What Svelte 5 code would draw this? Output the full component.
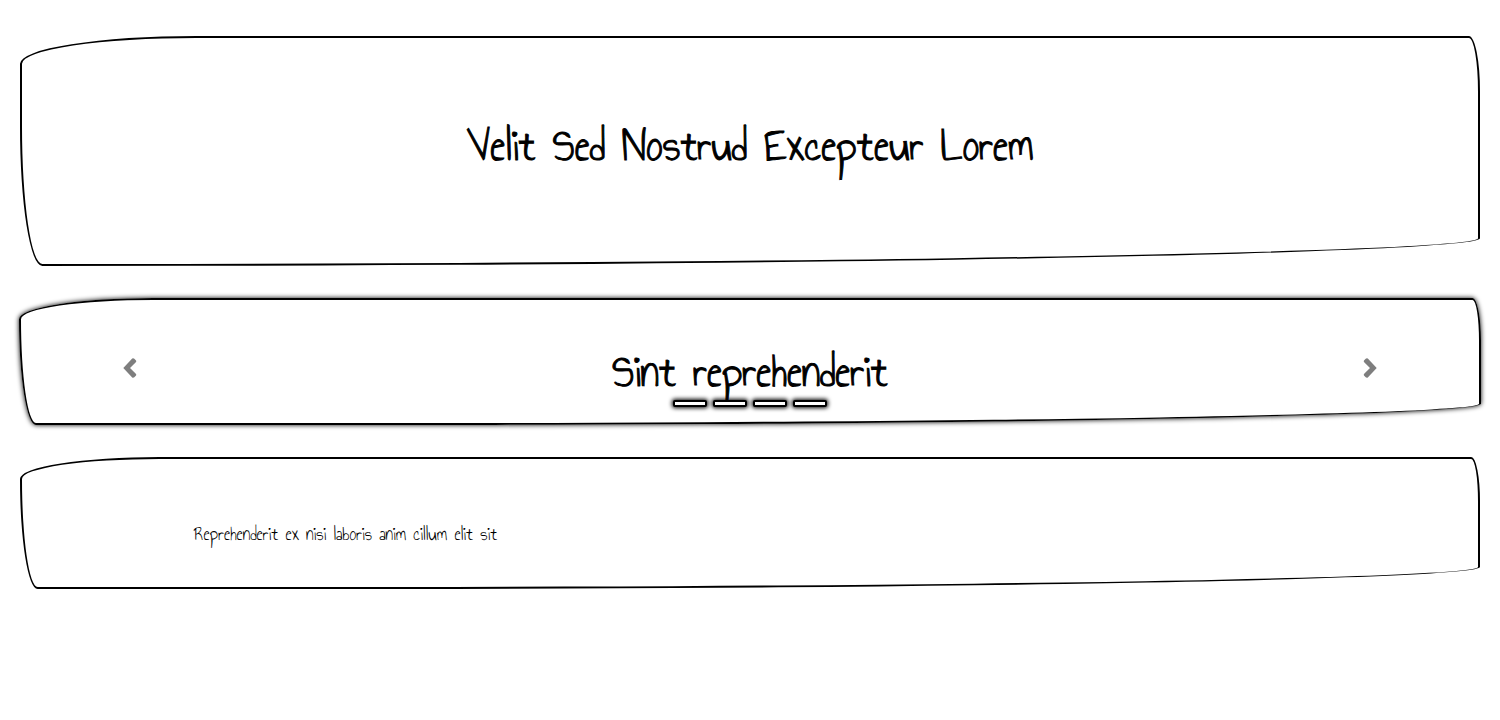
<script>
  const slides = ['Sint reprehenderit', 'Sint reprehenderit', 'Sint reprehenderit', 'Sint reprehenderit'];
  let current = $state(0);
  const step = (by) => (current = (current + by + slides.length) % slides.length);
</script>

<main>
  <header class="sketch hero">
    <h1>Velit Sed Nostrud Excepteur Lorem</h1>
  </header>

  <section class="sketch carousel">
    <button class="arrow" aria-label="Previous" onclick={() => step(-1)}>
      <svg viewBox="0 0 14 20" width="14" height="20" aria-hidden="true">
        <path d="M0.300 10 9.200 0.600Q10.200-.2 11.300.7L12.800 2.200Q13.700 3.200 12.800 4.200L7 10 12.800 15.800Q13.700 16.800 12.800 17.800L11.300 19.300Q10.200 20.200 9.200 19.400Z" />
      </svg>
    </button>
    <div class="slide">
      <h2>{slides[current]}</h2>
      <div class="dots">
        {#each slides as _, i}
          <button class="dot" aria-label={`Slide ${i + 1}`} onclick={() => (current = i)}></button>
        {/each}
      </div>
    </div>
    <button class="arrow" aria-label="Next" onclick={() => step(1)}>
      <svg viewBox="0 0 14 20" width="14" height="20" aria-hidden="true">
        <path d="M13.700 10 4.800 0.600Q3.800-.2 2.700.7L1.200 2.200Q.3 3.200 1.200 4.200L7 10 1.200 15.800Q.3 16.800 1.200 17.800L2.700 19.300Q3.800 20.200 4.800 19.400Z" />
      </svg>
    </button>
  </section>

  <section class="sketch note">
    <p>Reprehenderit ex nisi laboris anim cillum elit sit</p>
  </section>
</main>

<style>
  :global(body) {
    margin: 0;
    background: #fff;
    color: #000;
    font-family: "Annie Use Your Telescope", "Neucha", cursive, sans-serif;
  }

  main {
    display: flex;
    flex-direction: column;
    gap: 32px;
    padding: 36px 20px;
  }

  h1,
  h2,
  p {
    margin: 0;
    font-weight: 400;
  }

  h1,
  h2 {
    font-size: 46px;
    line-height: 48px;
    text-align: center;
    -webkit-text-stroke: 1px #000;
  }

  .sketch {
    box-sizing: border-box;
    border: 2px solid #000;
    border-radius: 190px 12px 1550px 24px / 30px 60px 30px 150px;
  }

  .hero {
    padding: 84px 32px 94px;
  }

  .carousel {
    display: grid;
    grid-template-columns: 15% 1fr 15%;
    align-items: center;
    margin: 0 -1px;
    box-shadow: 0 0 5px 0 #000;
  }

  .slide {
    padding: 48px 0 16px;
  }

  .dots {
    display: flex;
    justify-content: center;
    gap: 6px;
    margin-top: 4px;
  }

  .dot {
    position: relative;
    box-sizing: border-box;
    width: 34px;
    height: 7px;
    padding: 0;
    border: 2px solid #000;
    border-radius: 2px;
    background: #fff;
    box-shadow: 0 0 4px 1px #000;
  }

  .arrow {
    display: flex;
    justify-content: center;
    padding: 40px 0;
    border: 0;
    background: none;
    opacity: 0.5;
    cursor: pointer;
  }

  .arrow svg {
    margin-top: 12px;
  }

  .note {
    padding: 64px 172px 40px;
    font-size: 19px;
    line-height: 24px;
  }
</style>
